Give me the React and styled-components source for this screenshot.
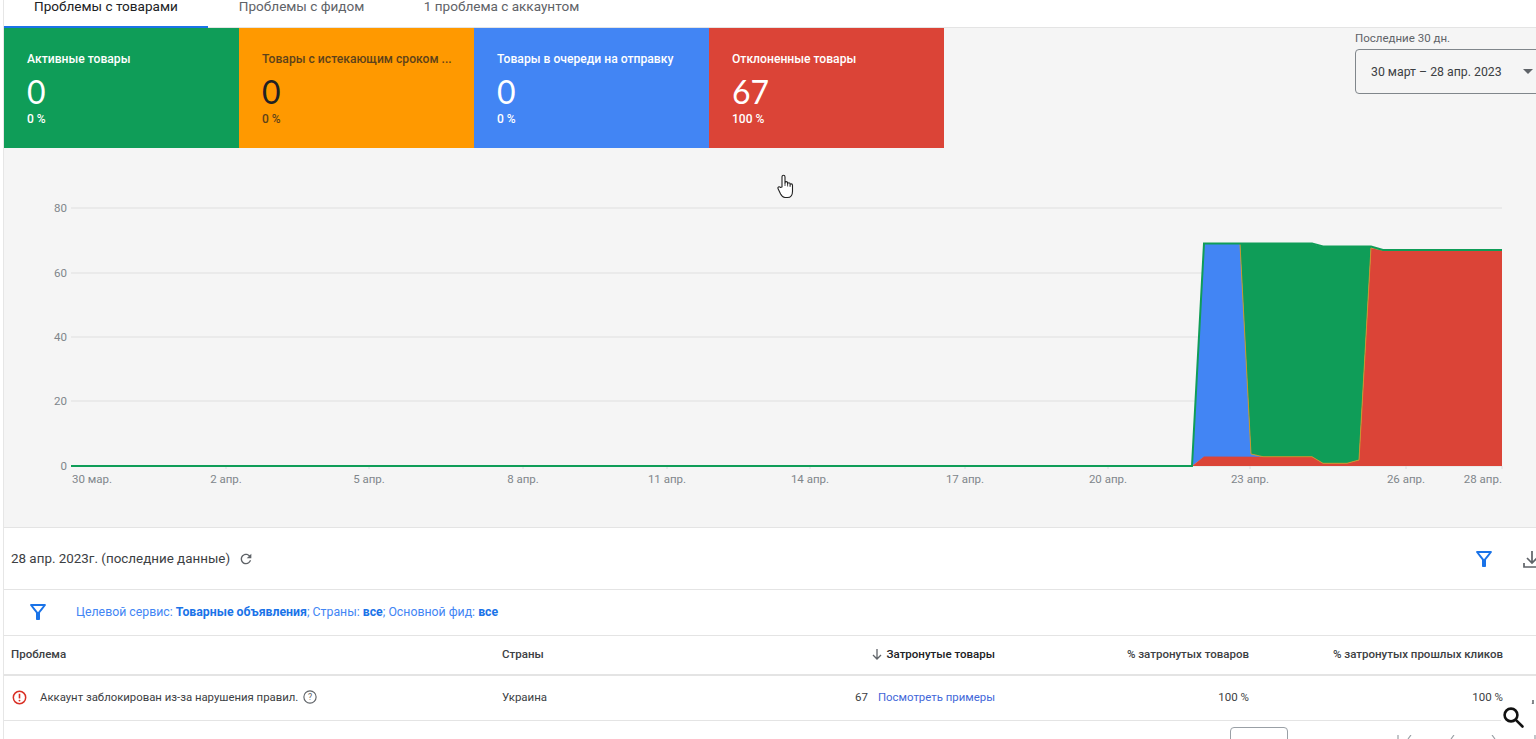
import React from "react";
import styled, { createGlobalStyle } from "styled-components";

const Global = createGlobalStyle`
  html, body { margin: 0; padding: 0; background: #fff; overflow: hidden; }
  body { font-family: Roboto, "Liberation Sans", sans-serif; color: #3c4043; }
  * { box-sizing: border-box; }
`;

const Page = styled.div`
  position: relative;
  width: 1536px;
  height: 739px;
  overflow: hidden;
  background: #fff;
  padding-left: 3px;
`;
const Frame = styled.div`
  border-left: 1px solid #e6e6e6;
  height: 100%;
  display: flex;
  flex-direction: column;
`;
const Tabs = styled.nav`
  display: flex;
  height: 28px;
  flex: none;
  border-bottom: 1px solid #e4e4e4;
`;
const Tab = styled.div`
  height: 28px;
  padding: 0 ${p => p.$pad}px;
  font-size: 13.55px;
  line-height: 12px;
  white-space: nowrap;
  color: ${p => (p.$active ? "#202124" : "#5f6368")};
  border-bottom: 2px solid ${p => (p.$active ? "#1a73e8" : "transparent")};
`;
const Gray = styled.section`
  flex: none;
  height: 500px;
  background: #f5f5f5;
  border-bottom: 1px solid #e4e4e4;
  display: flex;
  flex-direction: column;
`;
const TopRow = styled.div`
  display: flex;
  justify-content: space-between;
  height: 120px;
  flex: none;
`;
const Stats = styled.div`
  display: flex;
`;
const Stat = styled.div`
  width: 235px;
  height: 120px;
  padding: 23.5px 23px 0;
  background: ${p => p.$bg};
  color: ${p => p.$fg};
  display: flex;
  flex-direction: column;
`;
const StatLabel = styled.div`
  font-size: 12.15px;
  line-height: 15px;
  font-weight: 500;
  white-space: nowrap;
  opacity: ${p => p.$dim || 1};
`;
const StatValue = styled.div`
  font-family: Lato, Roboto, sans-serif;
  font-size: 32px;
  line-height: 32px;
  margin-top: 9.5px;
  font-weight: 400;
`;
const StatPct = styled.div`
  font-size: 12px;
  line-height: 13px;
  margin-top: 4.5px;
  font-weight: 500;
  opacity: ${p => p.$dim || 1};
`;
const Picker = styled.div`
  width: 181px;
  padding-top: 3px;
  flex: none;
`;
const PickerLabel = styled.div`
  font-size: 11.5px;
  line-height: 14px;
  color: #5f6368;
`;
const PickerBox = styled.div`
  margin-top: 4px;
  width: 195px;
  height: 45px;
  border: 1px solid #80868b;
  border-radius: 4px;
  display: flex;
  align-items: center;
  padding-left: 15px;
  font-size: 12.3px;
  color: #3c4043;
  white-space: nowrap;
`;
const Caret = styled.span`
  margin-left: 21px;
  width: 0;
  height: 0;
  border-left: 5px solid transparent;
  border-right: 5px solid transparent;
  border-top: 5px solid #5f6368;
`;
const Chart = styled.svg`
  display: block;
  flex: none;
  width: 1532px;
  height: 379px;
`;
const DateBar = styled.div`
  flex: none;
  height: 62px;
  border-bottom: 1px solid #e4e4e4;
  display: flex;
  align-items: center;
  padding: 0 0 0 7px;
  font-size: 13.4px;
  color: #3c4043;
`;
const Refresh = styled.svg`
  width: 16px;
  height: 16px;
  margin-left: 8px;
  fill: #5f6368;
`;
const BarActions = styled.div`
  margin-left: auto;
  display: flex;
  align-items: center;
  gap: 24px;
  margin-right: -8px;
`;
const FilterIcon = styled.svg`
  width: 24px;
  height: 24px;
  fill: #1a73e8;
  flex: none;
`;
const DownloadIcon = styled.svg`
  width: 24px;
  height: 24px;
  fill: none;
  stroke: #5f6368;
  stroke-width: 1.7;
  flex: none;
`;
const FilterBar = styled.div`
  flex: none;
  height: 46px;
  border-bottom: 1px solid #e4e4e4;
  display: flex;
  align-items: center;
  padding: 0 0 2px 22px;
  gap: 26px;
  font-size: 12.3px;
  color: #4285f4;
  b { font-weight: 700; color: #1a73e8; }
`;
const Grid = styled.div`
  flex: none;
  display: grid;
  grid-template-columns: 491px 200px 293px 254px 254px;
  align-items: center;
  padding: 0 0 2px 7px;
  height: ${p => p.$h}px;
  border-bottom: ${p => p.$bw}px solid #e4e4e4;
  font-size: 11.5px;
  color: #3c4043;
`;
const Head = styled.div`
  font-weight: 500;
  color: ${p => (p.$strong ? "#202124" : "#3c4043")};
  text-align: ${p => (p.$right ? "right" : "left")};
  white-space: nowrap;
`;
const Cell = styled.div`
  display: flex;
  align-items: center;
  justify-content: ${p => (p.$right ? "flex-end" : "flex-start")};
  white-space: nowrap;
  color: #3c4043;
`;
const Issue = styled.span`
  font-size: 11.35px;
`;
const Link = styled.span`
  color: #4267d9;
  font-size: 11.4px;
  margin-left: 10px;
`;
const SmallIcon = styled.svg`
  flex: none;
  width: ${p => p.$s}px;
  height: ${p => p.$s}px;
  margin: ${p => p.$m};
`;
const SortArrow = styled.svg`
  width: 12px;
  height: 12px;
  margin-right: 4px;
  vertical-align: -2px;
  fill: none;
  stroke: #5f6368;
  stroke-width: 1.3;
`;
const PagerBox = styled.div`
  position: absolute;
  left: 1230px;
  top: 727px;
  width: 58px;
  height: 30px;
  border: 1px solid #9aa0a6;
  border-radius: 4px;
`;
const Chevrons = styled.svg`
  position: absolute;
  left: 1390px;
  top: 735px;
  width: 146px;
  height: 4px;
  fill: none;
  stroke: #9aa0a6;
  stroke-width: 1.2;
`;
const Magnifier = styled.div`
  position: absolute;
  left: 1501px;
  top: 704px;
  width: 35px;
  height: 29px;
  background: #fff;
  display: flex;
  align-items: flex-start;
  padding: 1px 0 0 0;
  svg { width: 24px; height: 24px; }
`;
const Scrap = styled.svg`
  position: absolute;
  left: 1530px;
  top: 699px;
  width: 6px;
  height: 8px;
`;
const HandCursor = styled.svg`
  position: absolute;
  left: 777px;
  top: 174px;
  width: 17px;
  height: 25px;
`;

const stats = [
  { label: "Активные товары", value: "0", pct: "0 %", bg: "#0f9d58", fg: "#fff" },
  { label: "Товары с истекающим сроком ...", value: "0", pct: "0 %", bg: "#ff9900", fg: "#202124", dim: 0.72 },
  { label: "Товары в очереди на отправку", value: "0", pct: "0 %", bg: "#4285f4", fg: "#fff" },
  { label: "Отклоненные товары", value: "67", pct: "100 %", bg: "#db4437", fg: "#fff" },
];

const yTicks = [[80, 208], [60, 273], [40, 337], [20, 401], [0, 466]];
const xTicks = [
  ["30 мар.", 72, "start", false], ["2 апр.", 226, "middle", true], ["5 апр.", 369, "middle", true],
  ["8 апр.", 523, "middle", true], ["11 апр.", 667, "middle", true], ["14 апр.", 810, "middle", true],
  ["17 апр.", 965, "middle", true], ["20 апр.", 1108, "middle", true], ["23 апр.", 1250, "middle", true],
  ["26 апр.", 1406, "middle", true], ["28 апр.", 1502, "end", true],
];
const tickAt = { "28 апр.": 1502 };

const FILTER = "M7 6h10l-5.01 6.3L7 6zm-2.75-.39C6.27 8.2 10 13 10 13v6c0 .55.45 1 1 1h2c.55 0 1-.45 1-1v-6s3.72-4.8 5.74-7.39c.51-.66.04-1.61-.79-1.61H5.04c-.83 0-1.3.95-.79 1.61z";

function TrendChart() {
  return (
    <Chart viewBox="4 148 1532 379">
      {yTicks.map(([v, y]) => (
        <g key={v}>
          <line x1="71" x2="1502" y1={y} y2={y} stroke="#e6e6e6" strokeWidth="1.5" />
          <text x="67" y={y + 4} textAnchor="end" fontSize="11.5" fill="#80868b" fontFamily="Roboto, sans-serif">{v}</text>
        </g>
      ))}
      {xTicks.map(([t, x, a, tick]) => (
        <g key={t}>
          {tick && <line x1={tickAt[t] || x} x2={tickAt[t] || x} y1="466" y2="469" stroke="#dadce0" />}
          <text x={x} y="483" textAnchor={a} fontSize="11.5" fill="#80868b" fontFamily="Roboto, sans-serif">{t}</text>
        </g>
      ))}
      <polygon fill="#4285f4" points="1192,466 1204,244 1240,244 1251,454 1263,457 1204,457" />
      <polygon fill="#0f9d58" points="1240,244 1312,244 1323,247 1371,247 1359,460 1347,463.5 1323,463.5 1312,457 1263,457 1251,454" />
      <polygon fill="#db4437" points="1192,466 1204,456.5 1263,456.7 1312,456.7 1323,463.3 1347,463.3 1359,460 1371,248 1383,250.5 1502,250.5 1502,466" />
      <polyline fill="none" stroke="#c8962e" strokeWidth="1" points="1240,244 1251,454 1263,456.7 1312,456.7 1323,463.3 1347,463.3 1359,460 1371,247.7 1383,250.5" />
      <polyline fill="none" stroke="#0f9d58" strokeWidth="2" points="71,466 1192,466 1204,243.5 1312,243.5 1323,246.5 1371,246.5 1383,250 1502,250" />
    </Chart>
  );
}

export default function App() {
  return (
    <Page>
      <Global />
      <Frame>
        <Tabs>
          <Tab $active $pad={30}>Проблемы с товарами</Tab>
          <Tab $pad={31}>Проблемы с фидом</Tab>
          <Tab $pad={28.5}>1 проблема с аккаунтом</Tab>
        </Tabs>
        <Gray>
          <TopRow>
            <Stats>
              {stats.map(s => (
                <Stat key={s.label} $bg={s.bg} $fg={s.fg}>
                  <StatLabel $dim={s.dim}>{s.label}</StatLabel>
                  <StatValue>{s.value}</StatValue>
                  <StatPct $dim={s.dim}>{s.pct}</StatPct>
                </Stat>
              ))}
            </Stats>
            <Picker>
              <PickerLabel>Последние 30 дн.</PickerLabel>
              <PickerBox>30 март – 28 апр. 2023<Caret /></PickerBox>
            </Picker>
          </TopRow>
          <TrendChart />
        </Gray>
        <DateBar>
          28 апр. 2023г. (последние данные)
          <Refresh viewBox="0 0 24 24"><path d="M17.65 6.35C16.2 4.9 14.21 4 12 4c-4.42 0-7.99 3.58-7.99 8s3.57 8 7.99 8c3.73 0 6.84-2.55 7.73-6h-2.08c-.82 2.33-3.04 4-5.65 4-3.31 0-6-2.69-6-6s2.69-6 6-6c1.66 0 3.14.69 4.22 1.78L13 11h7V4l-2.35 2.35z" /></Refresh>
          <BarActions>
            <FilterIcon viewBox="0 0 24 24"><path d={FILTER} /></FilterIcon>
            <DownloadIcon viewBox="0 0 24 24"><path d="M12 4v12M7 11l5 5 5-5M4 16v4h16v-4" /></DownloadIcon>
          </BarActions>
        </DateBar>
        <FilterBar>
          <FilterIcon viewBox="0 0 24 24"><path d={FILTER} /></FilterIcon>
          <span>Целевой сервис: <b>Товарные объявления</b>; Страны: <b>все</b>; Основной фид: <b>все</b></span>
        </FilterBar>
        <Grid $h={40} $bw={2}>
          <Head>Проблема</Head>
          <Head>Страны</Head>
          <Head $right $strong>
            <SortArrow viewBox="0 0 12 12"><path d="M6 1v10M2 7l4 4 4-4" /></SortArrow>
            Затронутые товары
          </Head>
          <Head $right>% затронутых товаров</Head>
          <Head $right>% затронутых прошлых кликов</Head>
        </Grid>
        <Grid $h={45} $bw={1}>
          <Cell>
            <SmallIcon $s={15} $m="0 13px 0 1px" viewBox="0 0 16 16">
              <circle cx="8" cy="8" r="6.6" fill="none" stroke="#d93025" strokeWidth="1.6" />
              <path d="M8 4v5" stroke="#d93025" strokeWidth="1.7" />
              <circle cx="8" cy="11.3" r="1" fill="#d93025" />
            </SmallIcon>
            <Issue>Аккаунт заблокирован из-за нарушения правил.</Issue>
            <SmallIcon $s={14} $m="0 0 0 5px" viewBox="0 0 16 16">
              <circle cx="8" cy="8" r="7" fill="none" stroke="#5f6368" strokeWidth="1.3" />
              <text x="8" y="11.6" textAnchor="middle" fontSize="10" fill="#5f6368" fontFamily="Roboto, sans-serif">?</text>
            </SmallIcon>
          </Cell>
          <Cell>Украина</Cell>
          <Cell $right>67<Link>Посмотреть примеры</Link></Cell>
          <Cell $right>100 %</Cell>
          <Cell $right>100 %</Cell>
        </Grid>
      </Frame>
      <PagerBox />
      <Chevrons viewBox="0 0 146 4">
        <path d="M8 0v4M21 0l-3 4M64 0l-3 4M102 0l3 4M145 0v4" />
      </Chevrons>
      <Scrap viewBox="0 0 6 8"><path d="M3 1v4l-2 1" fill="none" stroke="#5f6368" strokeWidth="1.5" /></Scrap>
      <Magnifier>
        <svg viewBox="0 0 24 24" fill="none" stroke="#111" strokeWidth="2.6">
          <circle cx="10" cy="10" r="6.4" />
          <path d="M14.8 14.8L21.5 21.5" strokeLinecap="round" />
        </svg>
      </Magnifier>
      <HandCursor viewBox="0 0 17 25">
        <path d="M5 13V3c0-2.4 3-2.4 3 0v6c0-1.8 2.6-1.8 2.6 0v1c0-1.7 2.5-1.7 2.5 0v1c0-1.6 2.4-1.5 2.4.2v6c0 3.5-1.8 6.3-5 6.3H8c-2.4 0-3.4-1.4-4.4-3.4L1.2 15c-1-1.8 1-3 2.2-1.6z" fill="#fff" stroke="#222" strokeWidth="1.1" strokeLinejoin="round" />
        <path d="M8 9v3M10.6 10v2.5M13.1 11v2" fill="none" stroke="#222" strokeWidth="0.8" />
      </HandCursor>
    </Page>
  );
}
